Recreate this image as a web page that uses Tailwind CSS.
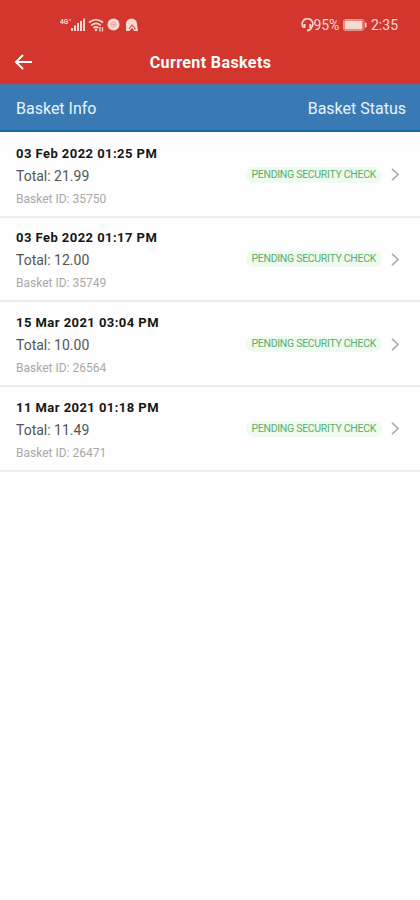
<!DOCTYPE html>
<html lang="en">

<head>
  <meta charset="UTF-8" />
  <meta name="viewport" content="width=device-width, initial-scale=1.0" />
  <title>Current Baskets</title>
  <script src="https://cdn.jsdelivr.net/npm/@tailwindcss/browser@4"></script>
</head>

<body class="min-h-screen bg-[#fefefe] font-['Roboto',sans-serif]">

  <header class="h-[84px] bg-[#d2362d] text-white">
    <!-- status bar -->
    <div class="flex h-10 items-center justify-between pt-[9px] pr-[22px] pl-[60px] text-[#fbd9d3]">
      <div class="flex items-center">
        <svg class="h-4 w-[25px]" viewBox="0 0 25 16" fill="currentColor">
          <text x="0" y="7" font-size="6.5" font-weight="700">4G</text>
          <path d="M9 2.500h2v1H9zM11 11h2v3h-2zM14 8.500h2V14h-2zM17 6h2v8h-2zM20 4h2v10h-2zM23 1.500h2V14h-2z" />
        </svg>
        <svg class="ml-[3px] h-4 w-4" viewBox="0 0 16 16" fill="none" stroke="currentColor" stroke-width="1.700">
          <path d="M1 5.500Q8 0 15 5.500M3.300 8.300Q8 4.500 12.700 8.300M5.500 11Q8 9 10.500 11" />
          <circle cx="8" cy="13" r="1.300" fill="currentColor" stroke="none" />
          <path d="M12 10v4.500M14.500 10v4.500" stroke-width="1.300" />
        </svg>
        <svg class="ml-[3px] h-[13px] w-[13px]" viewBox="0 0 13 13">
          <circle cx="6.500" cy="6.500" r="6" fill="currentColor" />
          <circle cx="6.500" cy="6.500" r="2.500" fill="none" stroke="#ea9f97" />
          <path d="M5 6.500h3" stroke="#ea9f97" />
        </svg>
        <svg class="ml-[5px] h-[14px] w-[14px]" viewBox="0 0 14 14">
          <path d="M1 12V6a5.500 5.500 0 0 1 11 0l1 7H9L7.500 10 4 13H1z" fill="currentColor" />
          <path d="M4 11l3-4 3 3v2" fill="none" stroke="#d96459" stroke-width="1.200" />
        </svg>
      </div>
      <div class="flex items-center text-sm leading-4">
        <svg class="h-[14px] w-[13px]" viewBox="0 0 13 14" fill="none" stroke="currentColor" stroke-width="1.800">
          <path d="M2.500 9.500A5.300 5.300 0 1 1 10.500 9.500Q9.500 12.500 6 12.500" />
          <path d="M3.500 6v4M9.300 6v4" stroke-width="2" />
        </svg>
        <span class="tracking-[-0.2px]">95%</span>
        <svg class="ml-[4px] h-3 w-6" viewBox="0 0 24 12" fill="currentColor">
          <rect x=".5" y=".5" width="20.500" height="11" rx="2" fill="none" stroke="currentColor" stroke-opacity=".6" />
          <rect x="1.500" y="1.500" width="18" height="9" rx="1" />
          <rect x="22" y="3.500" width="1.500" height="5" rx=".7" />
        </svg>
        <span class="ml-[4px]">2:35</span>
      </div>
    </div>
    <!-- title bar -->
    <div class="grid h-11 grid-cols-[1fr_auto_1fr] items-center pl-[14px]">
      <svg class="h-4 w-[18px]" viewBox="0 0 18 16" fill="none" stroke="currentColor" stroke-width="2">
        <path d="M18 8H2M9 1L2 8l7 7" />
      </svg>
      <h1 class="-ml-px pt-px pr-[12px] text-base font-bold tracking-[0.4px]">Current Baskets</h1>
    </div>
  </header>

  <div class="flex h-12 items-center justify-between border-t border-b-2 border-t-[#576b96] border-b-[#1668a2] bg-[#397ab5] pt-[2px] pr-[14px] pl-4 text-base text-[#e6f4fc]">
    <span>Basket Info</span>
    <span>Basket Status</span>
  </div>

  <ul id="baskets" class="pt-px"></ul>

  <template id="basketRow">
    <li class="flex h-[84.67px] items-center justify-between border-b-2 border-[#ececec] pr-[21px] pl-4">
      <div class="pt-[5px]">
        <p data-field="date" class="text-[13px] leading-[22px] font-bold tracking-[0.45px] text-[#161616]"></p>
        <p data-field="total" class="text-sm leading-[22px] text-[#555]"></p>
        <p data-field="id" class="text-xs leading-6 text-[#a8a8a8]"></p>
      </div>
      <div class="flex items-center pt-px">
        <span class="rounded-full bg-[#effaf0] px-[6px] text-[10.5px] leading-4 tracking-[-0.3px] text-[#58ae69]">PENDING SECURITY CHECK</span>
        <svg class="ml-[9px] h-[13px] w-2" viewBox="0 0 8 13" fill="none" stroke="#acacac" stroke-width="1.600">
          <path d="M1 .8l6 5.700-6 5.700" />
        </svg>
      </div>
    </li>
  </template>

</body>

<script>
  const baskets = [
    { date: '03 Feb 2022 01:25 PM', total: '21.99', id: 35750 },
    { date: '03 Feb 2022 01:17 PM', total: '12.00', id: 35749 },
    { date: '15 Mar 2021 03:04 PM', total: '10.00', id: 26564 },
    { date: '11 Mar 2021 01:18 PM', total: '11.49', id: 26471 },
  ];
  const list = document.getElementById('baskets');
  const template = document.getElementById('basketRow');

  baskets.forEach(function(basket) {
    const row = template.content.cloneNode(true);
    row.querySelector('[data-field=date]').textContent = basket.date;
    row.querySelector('[data-field=total]').textContent = 'Total: ' + basket.total;
    row.querySelector('[data-field=id]').textContent = 'Basket ID: ' + basket.id;
    list.appendChild(row);
  });
</script>

</html>
